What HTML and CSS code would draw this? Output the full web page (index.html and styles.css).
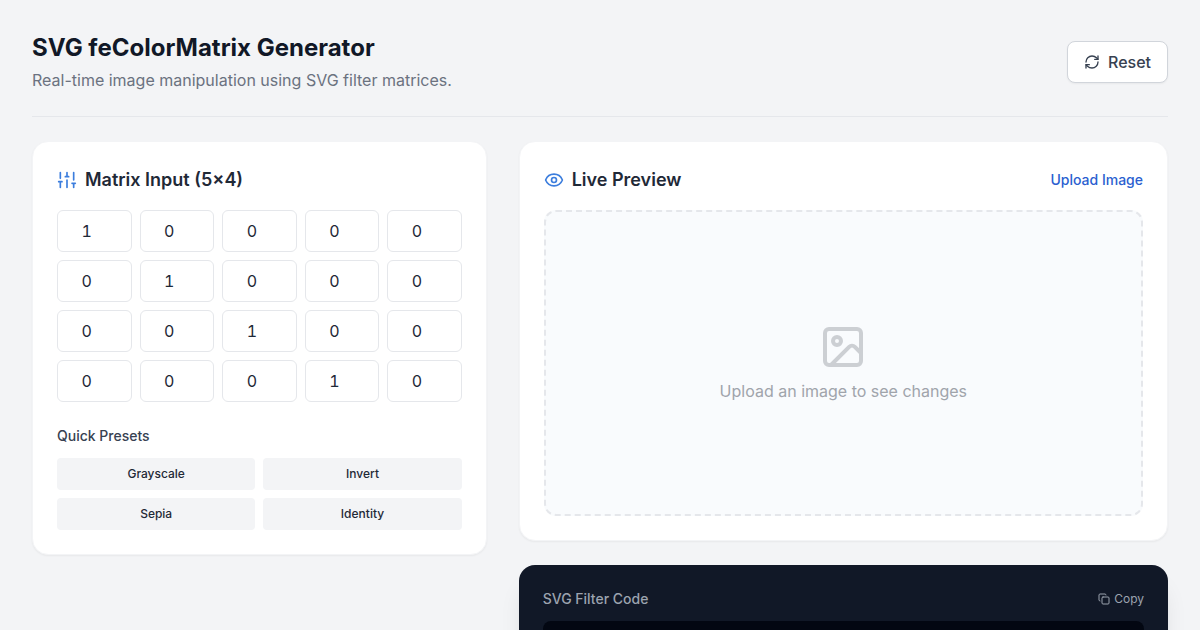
FILE: index.html
```html
<!DOCTYPE html>
<html lang="en">
<head>
<meta charset="utf-8">
<meta name="viewport" content="width=device-width, initial-scale=1">
<title>SVG feColorMatrix Generator</title>
<link rel="stylesheet" href="styles.css">
</head>
<body>
<div class="page">
  <header class="page-header">
    <div>
      <h1 class="page-title">SVG feColorMatrix Generator</h1>
      <p class="page-subtitle">Real-time image manipulation using SVG filter matrices.</p>
    </div>
    <button type="button" class="reset">
      <svg class="icon icon-sm" viewBox="0 0 24 24" aria-hidden="true"><path d="M3 12a9 9 0 0 1 9-9 9.75 9.75 0 0 1 6.74 2.74L21 8"/><path d="M21 3v5h-5"/><path d="M21 12a9 9 0 0 1-9 9 9.75 9.75 0 0 1-6.74-2.74L3 16"/><path d="M8 16H3v5"/></svg>
      Reset
    </button>
  </header>

  <main class="layout">
    <section class="card">
      <h2 class="card-title">
        <svg class="icon icon-md icon-blue" viewBox="0 0 24 24" aria-hidden="true"><path d="M4 21v-7M4 10V3M12 21v-9M12 8V3M20 21v-5M20 12V3M2 14h4M10 8h4M18 16h4"/></svg>
        Matrix Input (5×4)
      </h2>
      <div class="matrix">
        <input class="cell" type="number" value="1" aria-label="Row 1, column 1">
        <input class="cell" type="number" value="0" aria-label="Row 1, column 2">
        <input class="cell" type="number" value="0" aria-label="Row 1, column 3">
        <input class="cell" type="number" value="0" aria-label="Row 1, column 4">
        <input class="cell" type="number" value="0" aria-label="Row 1, column 5">
        <input class="cell" type="number" value="0" aria-label="Row 2, column 1">
        <input class="cell" type="number" value="1" aria-label="Row 2, column 2">
        <input class="cell" type="number" value="0" aria-label="Row 2, column 3">
        <input class="cell" type="number" value="0" aria-label="Row 2, column 4">
        <input class="cell" type="number" value="0" aria-label="Row 2, column 5">
        <input class="cell" type="number" value="0" aria-label="Row 3, column 1">
        <input class="cell" type="number" value="0" aria-label="Row 3, column 2">
        <input class="cell" type="number" value="1" aria-label="Row 3, column 3">
        <input class="cell" type="number" value="0" aria-label="Row 3, column 4">
        <input class="cell" type="number" value="0" aria-label="Row 3, column 5">
        <input class="cell" type="number" value="0" aria-label="Row 4, column 1">
        <input class="cell" type="number" value="0" aria-label="Row 4, column 2">
        <input class="cell" type="number" value="0" aria-label="Row 4, column 3">
        <input class="cell" type="number" value="1" aria-label="Row 4, column 4">
        <input class="cell" type="number" value="0" aria-label="Row 4, column 5">
      </div>
      <h3 class="presets-title">Quick Presets</h3>
      <div class="presets">
        <button type="button" class="preset">Grayscale</button>
        <button type="button" class="preset">Invert</button>
        <button type="button" class="preset">Sepia</button>
        <button type="button" class="preset">Identity</button>
      </div>
    </section>

    <div class="output">
      <section class="card preview-card">
        <div class="card-header">
          <h2 class="card-title">
            <svg class="icon icon-md icon-blue" viewBox="0 0 24 24" aria-hidden="true"><path d="M2.06 12.35a1 1 0 0 1 0-.7 10.75 10.75 0 0 1 19.88 0 1 1 0 0 1 0 .7 10.75 10.75 0 0 1-19.88 0"/><circle cx="12" cy="12" r="3"/></svg>
            Live Preview
          </h2>
          <button type="button" class="upload">Upload Image</button>
        </div>
        <div class="dropzone">
          <svg class="icon icon-lg" viewBox="0 0 24 24" aria-hidden="true"><rect x="3" y="3" width="18" height="18" rx="2"/><circle cx="9" cy="9" r="2"/><path d="m21 15-3.09-3.09a2 2 0 0 0-2.82 0L6 21"/></svg>
          <p class="dropzone-text">Upload an image to see changes</p>
        </div>
      </section>

      <section class="code-card">
        <div class="code-header">
          <h2 class="code-title">SVG Filter Code</h2>
          <button type="button" class="copy">
            <svg class="icon icon-xs" viewBox="0 0 24 24" aria-hidden="true"><rect x="8" y="8" width="14" height="14" rx="2"/><path d="M4 16c-1.1 0-2-.9-2-2V4c0-1.1.9-2 2-2h10c1.1 0 2 .9 2 2"/></svg>
            Copy
          </button>
        </div>
        <div class="code-block"></div>
      </section>
    </div>
  </main>
</div>
</body>
</html>
```
FILE: styles.css
```css
*, *::before, *::after { box-sizing: border-box; }

body {
  margin: 0;
  background: #f3f4f6;
  color: #111827;
  font-family: Inter, "Liberation Sans", sans-serif;
  font-size: 16px;
  line-height: 24px;
}

h1, h2, h3, p { margin: 0; }

button, input { font: inherit; color: inherit; margin: 0; }

button { border: 0; padding: 0; background: none; cursor: pointer; }

.page { max-width: 1280px; margin: 0 auto; padding: 32px; }

.page-header {
  display: flex;
  align-items: center;
  justify-content: space-between;
  padding-bottom: 24px;
  margin-bottom: 24px;
  border-bottom: 1px solid #e5e7eb;
}

.page-title { font-size: 24px; line-height: 32px; font-weight: 700; }

.page-subtitle { margin-top: 4px; color: #6b7280; }

.icon {
  flex: none;
  fill: none;
  stroke: currentColor;
  stroke-width: 2;
  stroke-linecap: round;
  stroke-linejoin: round;
}
.icon-xs { width: 12px; height: 12px; }
.icon-sm { width: 16px; height: 16px; }
.icon-md { width: 20px; height: 20px; }
.icon-lg { width: 48px; height: 48px; opacity: 0.5; }
.icon-blue { color: #3b7ddd; }

.reset {
  display: flex;
  align-items: center;
  gap: 8px;
  padding: 8px 16px;
  border: 1px solid #d1d5db;
  border-radius: 8px;
  background: #fff;
  color: #374151;
  font-weight: 500;
  box-shadow: 0 1px 2px rgba(0, 0, 0, 0.05);
}

.layout {
  display: grid;
  grid-template-columns: repeat(12, minmax(0, 1fr));
  column-gap: 32px;
  align-items: start;
}
.layout > .card { grid-column: span 5; }
.output {
  grid-column: span 7;
  display: flex;
  flex-direction: column;
  gap: 24px;
}

.card {
  padding: 24px;
  border: 1px solid #f3f4f6;
  border-radius: 16px;
  background: #fff;
  box-shadow: 0 1px 2px rgba(0, 0, 0, 0.05);
}

.card-title {
  display: flex;
  align-items: center;
  gap: 8px;
  font-size: 18px;
  line-height: 28px;
  font-weight: 600;
  color: #1f2937;
}

.matrix {
  display: grid;
  grid-template-columns: repeat(5, minmax(0, 1fr));
  gap: 8px;
  margin-top: 16px;
}
.cell {
  width: 100%;
  height: 42px;
  padding: 8px;
  border: 1px solid #e5e7eb;
  border-radius: 6px;
  background: #fff;
  color: #1f2937;
  text-align: center;
  font-variant-numeric: tabular-nums;
}

.presets-title {
  margin: 24px 0 12px;
  font-size: 14px;
  line-height: 20px;
  font-weight: 500;
  color: #374151;
}
.presets {
  display: grid;
  grid-template-columns: repeat(2, minmax(0, 1fr));
  gap: 8px;
}
.preset {
  padding: 8px 12px;
  border-radius: 4px;
  background: #f3f4f6;
  color: #1f2937;
  font-size: 12px;
  line-height: 16px;
  font-weight: 500;
}

.preview-card { display: flex; flex-direction: column; min-height: 400px; }
.card-header {
  display: flex;
  align-items: center;
  justify-content: space-between;
  margin-bottom: 16px;
}
.upload { color: #2b5fd0; font-size: 14px; line-height: 20px; font-weight: 500; }

.dropzone {
  flex: 1;
  display: flex;
  flex-direction: column;
  align-items: center;
  justify-content: center;
  gap: 8px;
  border: 2px dashed #e5e7eb;
  border-radius: 12px;
  background: #f9fbfd;
  color: #a0a4ab;
}

.code-card {
  padding: 24px;
  border-radius: 16px;
  background: #111827;
  box-shadow: 0 20px 25px -5px rgba(0, 0, 0, 0.1), 0 8px 10px -6px rgba(0, 0, 0, 0.1);
}
.code-header {
  display: flex;
  align-items: center;
  justify-content: space-between;
  margin-bottom: 12px;
}
.code-title { font-size: 14px; line-height: 20px; font-weight: 500; color: #9ca3af; }
.copy {
  display: flex;
  align-items: center;
  gap: 4px;
  color: #9ca3af;
  font-size: 12px;
  line-height: 16px;
}
.code-block { min-height: 160px; border-radius: 8px; background: #030712; }
```
